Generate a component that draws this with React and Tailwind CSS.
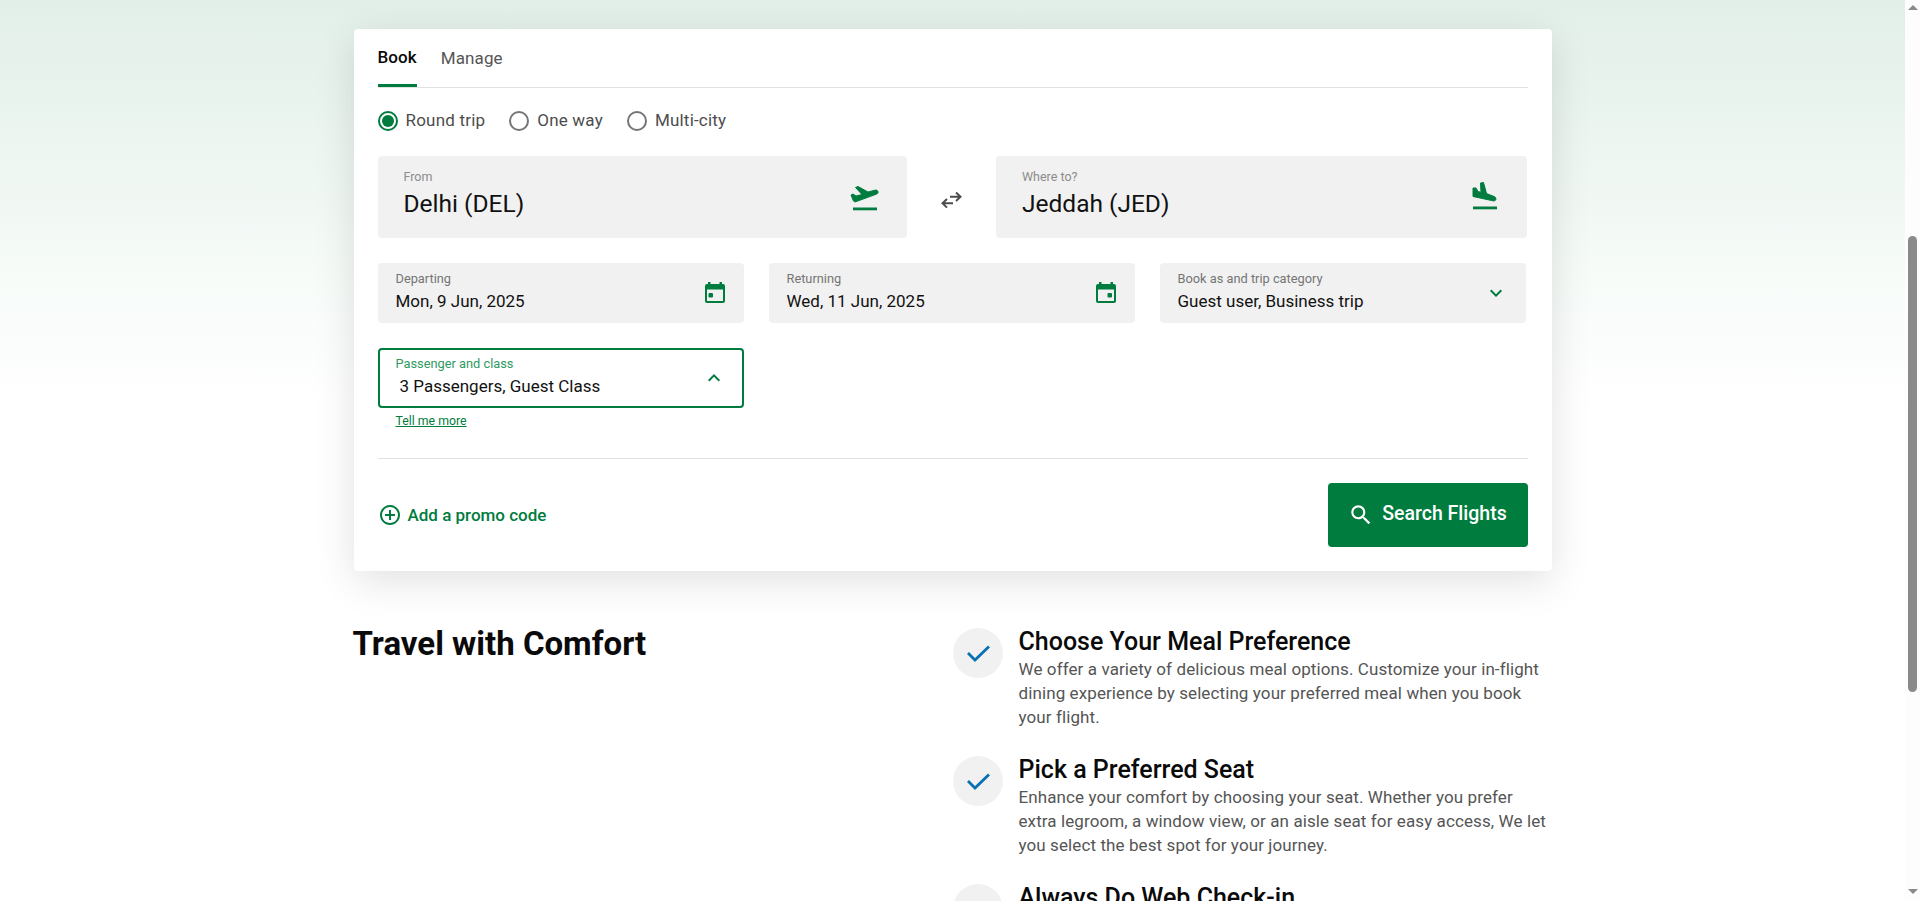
import { MdKeyboardArrowDown, MdKeyboardArrowUp, MdSearch, MdAddCircleOutline } from "react-icons/md";

const font = { fontFamily: '"Roboto", "Liberation Sans", sans-serif' };

function Radio({ label, checked }) {
  return (
    <label className="flex items-center gap-2 text-[17px] leading-6 tracking-[0.2px] text-[#4d4d4d]">
      <span className={`flex h-5 w-5 items-center justify-center rounded-full border-2 ${checked ? "border-[#007c3e]" : "border-[#757575]"}`}>
        {checked && <span className="h-3 w-3 rounded-full bg-[#007c3e]" />}
      </span>
      <span className="pb-[2px]">{label}</span>
    </label>
  );
}

function TakeoffIcon() {
  return (
    <svg width="31" height="28" viewBox="5 6 31 28" fill="#007c3e" className="mt-[2px]">
      <path d="M7 17l2-1 3 2 6-1.500L11.500 9.500 14 8.500l10 5.500 7-1.800c1.500-.4 2.800.3 3 1.600.2 1.200-.4 2-1.500 2.300L11 24l-1.500-1z" stroke="#007c3e" strokeWidth="1" strokeLinejoin="round" />
      <rect x="9" y="29.500" width="24" height="2.800" />
    </svg>
  );
}

function LandIcon() {
  return (
    <svg width="28" height="29" viewBox="11 6 28 29" fill="#007c3e" className="mb-[3px]">
      <path d="M13 13h3l2 3.500 3 .8-.500-9.300 3-.5 3 11 7.500 3c1.500.6 2.200 1.800 1.800 3-.4 1.300-1.400 1.600-2.800 1.300L13 21.500z" stroke="#007c3e" strokeWidth="1" strokeLinejoin="round" />
      <rect x="13" y="31.500" width="24" height="2.800" />
    </svg>
  );
}

function CalendarIcon({ dotX }) {
  return (
    <svg width="20" height="21" viewBox="0 0 20 21" fill="none" className="mb-[2px] mr-[1px]">
      <rect x="3" y="0" width="2.500" height="3" fill="#007c3e" />
      <rect x="14.500" y="0" width="2.500" height="3" fill="#007c3e" />
      <rect x="1" y="3" width="18" height="17" rx="1" stroke="#007c3e" strokeWidth="2" />
      <rect x="1" y="3" width="18" height="4.500" fill="#007c3e" />
      <rect x={dotX} y="11" width="4.500" height="4.500" rx="1" fill="#007c3e" />
    </svg>
  );
}

function AirportField({ label, value, icon, className }) {
  return (
    <div className={`flex h-[82px] flex-1 items-center justify-between rounded bg-[#f1f1f1] pl-[26px] ${className}`}>
      <div className="pb-[5px]">
        <div className="text-[12.500px] leading-4 text-[#8c8c8c]">{label}</div>
        <div className="mt-[3px] text-[24.500px] leading-8 text-[#111]">{value}</div>
      </div>
      {icon}
    </div>
  );
}

function SmallField({ label, value, icon, active }) {
  return (
    <div className={`flex h-[60px] items-center justify-between rounded ${active ? "border-2 border-[#007c3e] bg-white pl-4 pr-4" : "bg-[#f1f1f1] pl-[18px] pr-[18px]"}`}>
      <div className="pb-[3px]">
        <div className={`text-[12.800px] leading-4 ${active ? "text-[#2f9a63]" : "text-[#757575]"}`}>{label}</div>
        <div className={`mt-[2px] text-[17px] leading-6 text-[#111] ${active ? "pl-1" : ""}`}>{value}</div>
      </div>
      {icon}
    </div>
  );
}

function Feature({ title, text }) {
  return (
    <div className="flex gap-4">
      <div className="flex h-[50px] w-[50px] shrink-0 items-center justify-center rounded-full bg-[#f1f1f1] pl-[1px]">
        <svg width="27" height="20" viewBox="20 23 27 20" fill="none" stroke="#0a70b5" strokeWidth="2.800">
          <path d="M23 33l7 7 14-13.500" />
        </svg>
      </div>
      <div className="-mt-[1px]">
        <h3 className="text-[25px] font-medium leading-[30px] text-[#0a0a0a]">{title}</h3>
        <p className="text-[17px] leading-6 tracking-[0.1px] text-[#555]">{text}</p>
      </div>
    </div>
  );
}

export default function App() {
  return (
    <div className="flex h-[901px] overflow-hidden bg-white" style={font}>
      <main className="flex-1 bg-gradient-to-b from-[#e2efe8] via-[#f6fbf8] via-[30%] to-white to-[45%] pt-[29px]">
        <div className="mx-auto w-[1198px]">
          {/* Booking card */}
          <section className="rounded bg-white px-6 pb-6 shadow-[0_10px_40px_rgba(0,0,0,0.12)]">
            <div className="flex gap-6 border-b border-[#e2e2e2] text-[17px] tracking-[0.1px]">
              <div className="flex h-[58px] items-center border-b-[3px] border-[#007c3e] pt-[2px] font-medium text-[#0a0a0a]">Book</div>
              <div className="flex h-[58px] items-center pt-[2px] text-[#555]">Manage</div>
            </div>

            <div className="mt-[21px] flex h-6 gap-6">
              <Radio label="Round trip" checked />
              <Radio label="One way" />
              <Radio label="Multi-city" />
            </div>

            <div className="mt-[23px] flex items-center pr-[1px]">
              <AirportField label="From" value="Delhi (DEL)" className="pr-[27px]" icon={<TakeoffIcon />} />
              <div className="flex w-[89px] justify-center pl-[1px] pt-[6px]">
                <svg width="24" height="20" viewBox="11 5 24 20" fill="none" stroke="#4d4d4d" strokeWidth="2">
                  <path d="M21 11.700H31M27 7.500l4.500 4.200-4.500 4.200" />
                  <path d="M24 18.300H14M18 14l-4.500 4.300 4.500 4.300" />
                </svg>
              </div>
              <AirportField label="Where to?" value="Jeddah (JED)" className="pr-[28px]" icon={<LandIcon />} />
            </div>

            <div className="mt-[25px] grid grid-cols-3 gap-[25px] pr-[2px]">
              <SmallField label="Departing" value="Mon, 9 Jun, 2025" icon={<CalendarIcon dotX={3.5} />} />
              <SmallField label="Returning" value="Wed, 11 Jun, 2025" icon={<CalendarIcon dotX={11.5} />} />
              <SmallField label="Book as and trip category" value="Guest user, Business trip" icon={<MdKeyboardArrowDown className="text-[24px] text-[#007c3e]" />} />
              <div>
                <SmallField active label="Passenger and class" value="3 Passengers, Guest Class" icon={<MdKeyboardArrowUp className="text-[24px] text-[#007c3e]" />} />
                <a className="ml-[18px] mt-[5px] block text-[12.300px] leading-4 text-[#007c3e] underline">Tell me more</a>
              </div>
            </div>

            <div className="mt-[29px] flex items-center justify-between border-t border-[#e2e2e2] pt-6">
              <div className="flex items-center gap-[6px] text-[17px] font-medium text-[#007c3e]">
                <MdAddCircleOutline className="text-[24px]" />
                <span className="pt-[2px]">Add a promo code</span>
              </div>
              <button className="flex h-16 w-[200px] items-center justify-center gap-2 rounded bg-[#007c3e] pb-[2px] text-[19.500px] font-medium text-white">
                <MdSearch className="mt-[2px] text-[26px]" />
                Search Flights
              </button>
            </div>
          </section>

          {/* Travel tips */}
          <section className="mt-[57px] flex">
            <h2 className="-ml-[1px] -mt-1 w-[600px] text-[33px] font-bold leading-10 text-[#0a0a0a]">Travel with Comfort</h2>
            <div className="flex flex-1 flex-col gap-[27px]">
              <Feature title="Choose Your Meal Preference" text="We offer a variety of delicious meal options. Customize your in-flight dining experience by selecting your preferred meal when you book your flight." />
              <Feature title="Pick a Preferred Seat" text="Enhance your comfort by choosing your seat. Whether you prefer extra legroom, a window view, or an aisle seat for easy access, We let you select the best spot for your journey." />
              <Feature title="Always Do Web Check-in" text="" />
            </div>
          </section>
        </div>
      </main>

      {/* Browser scrollbar */}
      <div className="flex w-[15px] shrink-0 flex-col items-center bg-[#fdfdfd]">
        <div className="mt-[5px] h-0 w-0 border-x-[5px] border-b-[5px] border-x-transparent border-b-[#8a8a8a]" />
        <div className="mt-[226px] h-[456px] w-[9px] rounded-full bg-[#8a8a8a]" />
        <div className="mt-[197px] h-0 w-0 border-x-[5px] border-t-[5px] border-x-transparent border-t-[#8a8a8a]" />
      </div>
    </div>
  );
}
